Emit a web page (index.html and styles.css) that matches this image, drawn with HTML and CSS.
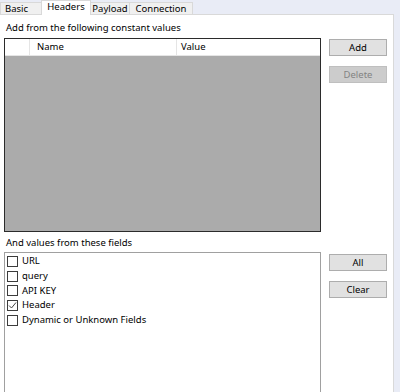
FILE: index.html
```html
<!DOCTYPE html>
<html>
<head>
<meta charset="utf-8">
<link rel="stylesheet" href="styles.css">
</head>
<body>
<div class="window">
  <div class="tabs">
    <div class="tab tab-basic">Basic</div>
    <div class="tab active">Headers</div>
    <div class="tab tab-payload">Payload</div>
    <div class="tab tab-connection">Connection</div>
  </div>
  <div class="panel">
    <div class="label first">Add from the following constant values</div>
    <div class="row">
      <div class="grid">
        <div class="grid-head">
          <div class="cell corner"></div>
          <div class="cell name">Name</div>
          <div class="cell value">Value</div>
        </div>
        <div class="grid-body"></div>
      </div>
      <div class="buttons">
        <button class="btn">Add</button>
        <button class="btn disabled">Delete</button>
      </div>
    </div>
    <div class="label second">And values from these fields</div>
    <div class="row">
      <div class="list">
        <div class="item"><span class="cb"></span>URL</div>
        <div class="item"><span class="cb"></span>query</div>
        <div class="item"><span class="cb"></span>API KEY</div>
        <div class="item"><span class="cb checked"><svg width="9" height="9" viewBox="0 0 9 9"><path d="M1 4.5 L3.5 7 L8 1.5" fill="none" stroke="#444" stroke-width="1"/></svg></span>Header</div>
        <div class="item"><span class="cb"></span>Dynamic or Unknown Fields</div>
      </div>
      <div class="buttons second-buttons">
        <button class="btn">All</button>
        <button class="btn">Clear</button>
      </div>
    </div>
  </div>
</div>
</body>
</html>
```
FILE: styles.css
```css
html, body {
  margin: 0;
  padding: 0;
  height: 100%;
  overflow: hidden;
}
body {
  background: #e9ecf6;
  font-family: "Noto Sans", "Open Sans", sans-serif;
  font-size: 9.5px;
  color: #000;
}
.window {
  width: 394px;
  height: 392px;
  display: flex;
  flex-direction: column;
}
.tabs {
  display: flex;
  align-items: flex-end;
  height: 14px;
}
.tab {
  height: 12px;
  line-height: 11px;
  padding: 0;
  background: #f0f0f0;
  border: 1px solid #d9d9d9;
  border-bottom: none;
  margin-right: -1px;
  box-sizing: border-box;
  text-align: center;
  white-space: nowrap;
}
.tab-basic {
  width: 42px;
  text-align: left;
  padding-left: 4px;
}
.tab-payload {
  width: 40px;
}
.tab-connection {
  width: 64px;
}
.tab.active {
  width: 50px;
  height: 15px;
  line-height: 12px;
  background: #fff;
  position: relative;
  z-index: 1;
  margin-bottom: -1px;
}
.panel {
  flex: 1;
  background: #fff;
  border: 1px solid #d9d9d9;
  border-left: none;
  border-bottom: none;
  padding: 0 6px 0 4px;
}
.label {
  height: 14px;
  line-height: 14px;
  padding-left: 2px;
}
.label.first {
  margin-top: 6px;
  margin-bottom: 3px;
}
.label.second {
  margin-top: 4px;
  margin-bottom: 2px;
}
.row {
  display: flex;
  gap: 8px;
}
.grid {
  width: 318px;
  height: 194px;
  border: 1px solid #2b2b2b;
  box-sizing: border-box;
  display: flex;
  flex-direction: column;
}
.grid-head {
  display: flex;
  height: 16px;
  background: #fff;
  border-bottom: 1px solid #e5e5e5;
  flex: none;
}
.cell {
  height: 16px;
  line-height: 16px;
  box-sizing: border-box;
}
.corner {
  width: 25px;
  border-right: 1px solid #e5e5e5;
}
.name {
  width: 147px;
  padding-left: 7px;
  border-right: 1px solid #e5e5e5;
}
.value {
  padding-left: 4px;
}
.grid-body {
  flex: 1;
  background: #ababab;
}
.buttons {
  display: flex;
  flex-direction: column;
  gap: 10px;
  padding-top: 1px;
}
.second-buttons {
  padding-top: 2px;
}
.btn {
  width: 58px;
  height: 17px;
  padding: 0;
  font-family: inherit;
  font-size: 9.5px;
  line-height: 15px;
  background: #e1e1e1;
  border: 1px solid #adadad;
  color: #000;
}
.btn.disabled {
  background: #cccccc;
  border-color: #bfbfbf;
  color: #838383;
}
.list {
  width: 318px;
  height: 150px;
  border: 1px solid #a0a0a0;
  box-sizing: border-box;
  padding-top: 1px;
}
.item {
  display: flex;
  align-items: center;
  height: 14.7px;
  line-height: 14px;
  padding-left: 2px;
}
.cb {
  width: 11px;
  height: 11px;
  border: 1px solid #3c3c3c;
  box-sizing: border-box;
  margin-right: 4px;
  display: flex;
  align-items: center;
  justify-content: center;
  background: #fff;
}
.cb svg {
  display: block;
}
```
